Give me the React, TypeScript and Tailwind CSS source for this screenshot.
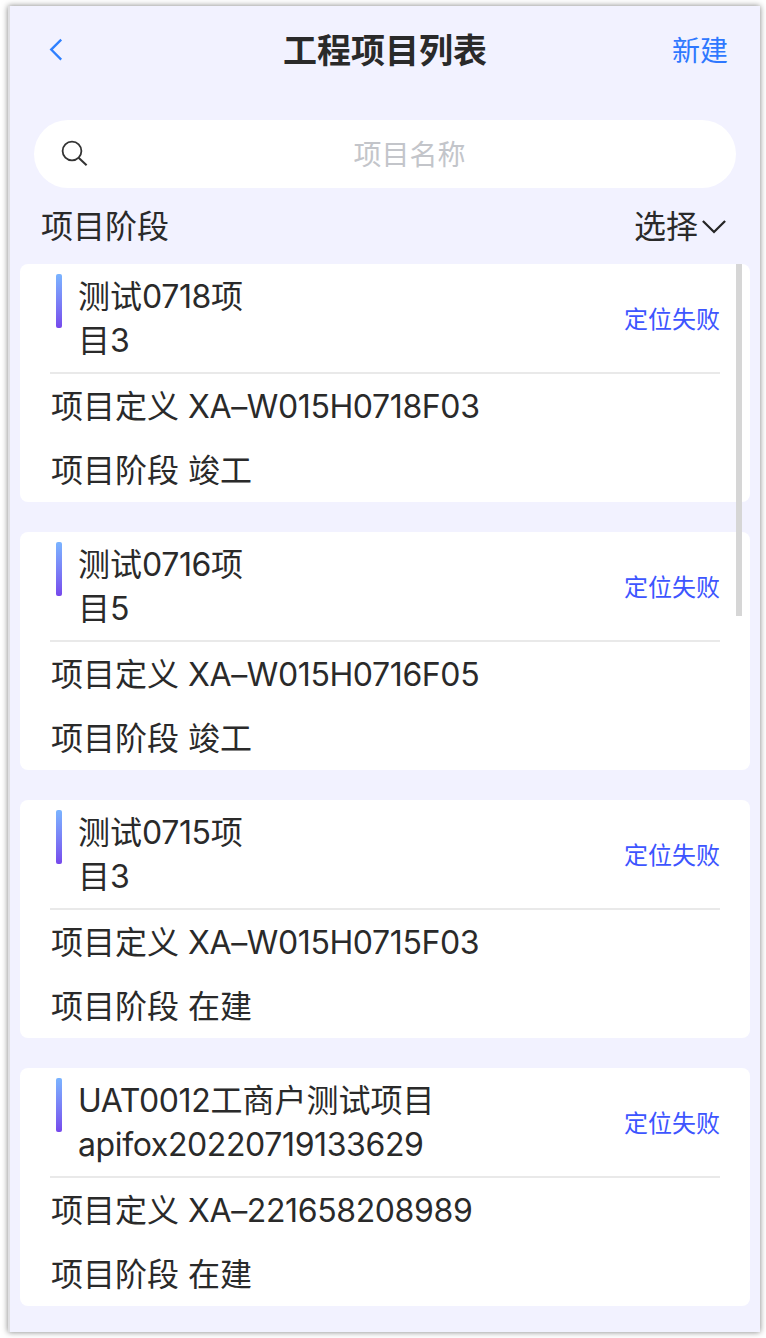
type Project = {
  id: number;
  title: string[];
  code: string;
  stage: string;
};

const projects: Project[] = [
  { id: 1, title: ['测试0718项', '目3'], code: 'XA–W015H0718F03', stage: '竣工' },
  { id: 2, title: ['测试0716项', '目5'], code: 'XA–W015H0716F05', stage: '竣工' },
  { id: 3, title: ['测试0715项', '目3'], code: 'XA–W015H0715F03', stage: '在建' },
  {
    id: 4,
    title: ['UAT0012工商户测试项目', 'apifox20220719133629'],
    code: 'XA–221658208989',
    stage: '在建',
  },
];

const BackIcon = () => (
  <svg width="14" height="24" viewBox="0 0 14 24" fill="none" className="block">
    <path d="M12.2 1.6 2.2 11.6l10 10" stroke="#2f80ff" strokeWidth="2.3" />
  </svg>
);

const SearchIcon = () => (
  <svg width="28" height="28" viewBox="0 0 28 28" fill="none" className="block">
    <circle cx="11" cy="11" r="9.4" stroke="#333" strokeWidth="1.8" />
    <path d="m17.6 17.8 8 7.4" stroke="#333" strokeWidth="2.1" />
  </svg>
);

const ChevronDown = () => (
  <svg width="24" height="14" viewBox="0 0 24 14" fill="none" className="block">
    <path d="m0.9 1 11.1 11L23.1 1" stroke="#262626" strokeWidth="2.3" />
  </svg>
);

// latin letters and digits are set a bit tighter than the Chinese glyphs
const MixedText = ({ text }: { text: string }) => (
  <>
    {text.split(/([A-Za-z0-9–]+)/).map((part, i) =>
      i % 2 ? (
        <span key={i} className="tracking-[-0.38px]">
          {part}
        </span>
      ) : (
        part
      )
    )}
  </>
);

const ProjectCard = ({ project }: { project: Project }) => (
  <li className="h-[238px] rounded-lg bg-white px-[30px]">
    <div className="flex h-[110px] items-center justify-between border-b-2 border-[#e9e9e9]">
      <div className="flex pl-1.5">
        <span className="mr-4 h-[54px] w-1.5 rounded-[2px] bg-linear-to-b from-[#7ab4ff] to-[#7648ec]" />
        <p className="whitespace-nowrap">
          {project.title.map((line) => (
            <span key={line} className="block h-11 pt-px leading-[44px]">
              <MixedText text={line} />
            </span>
          ))}
        </p>
      </div>
      <span className="pt-[3px] text-2xl leading-none text-[#3d55ff]">定位失败</span>
    </div>
    <p className="h-16 pt-px pl-px leading-[64px] whitespace-nowrap">
      项目定义 <MixedText text={project.code} />
    </p>
    <p className="h-16 pt-px pl-px leading-[64px] whitespace-nowrap">
      项目阶段 {project.stage}
    </p>
  </li>
);

export default function App() {
  return (
    <div className="h-[1338px] w-[766px] overflow-hidden bg-white pt-1.5 pl-2 font-['Inter','Noto_Sans_CJK_SC',sans-serif] text-[32px] text-[#2a2a2a]">
      <main className="relative h-[1326px] w-[752px] border-l-2 border-[#dfdfe2] bg-[#f2f2ff] shadow-[0_0_6px_rgba(0,0,0,0.5)]">
        <header className="grid h-[88px] grid-cols-[1fr_auto_1fr] items-center pr-8 pl-[39px]">
          <button className="justify-self-start" aria-label="返回">
            <BackIcon />
          </button>
          <h1 className="pt-0.5 pr-[7px] text-[34px] leading-none font-bold">
            工程项目列表
          </h1>
          <button className="justify-self-end pt-0.5 text-[28px] leading-none text-[#2f78ff]">
            新建
          </button>
        </header>
        <div className="mx-6 mt-[26px] flex h-[68px] items-center rounded-full bg-white pl-[27px]">
          <SearchIcon />
          <span className="flex-1 pt-0.5 pr-1.5 text-center text-[28px] leading-none text-[#c3c5ca]">
            项目名称
          </span>
        </div>
        <div className="flex h-[76px] items-center justify-between pt-0.5 pr-[34px] pl-[31px]">
          <span>项目阶段</span>
          <button className="flex items-center gap-1">
            选择
            <ChevronDown />
          </button>
        </div>
        <ul className="mx-2.5 flex flex-col gap-[30px]">
          {projects.map((project) => (
            <ProjectCard key={project.id} project={project} />
          ))}
        </ul>
        <div className="absolute top-[258px] right-[18px] h-[352px] w-1.5 bg-[#d6d6d6]" />
      </main>
    </div>
  );
}
